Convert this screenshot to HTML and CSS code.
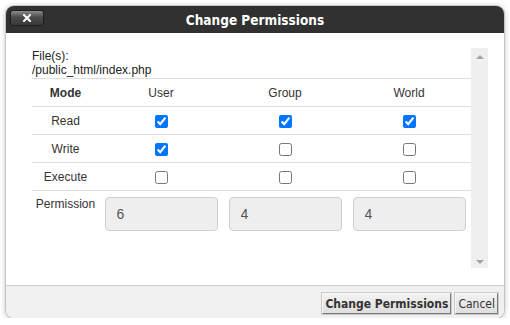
FILE: index.html
```html
<!DOCTYPE html>
<html lang="en">
<head>
  <meta charset="UTF-8">
  <title>Change Permissions</title>
  <link rel="stylesheet" href="styles.css">
</head>
<body>
  <div class="dialog">
    <div class="dialog-header">
      <button class="close-btn" title="Close">
        <svg width="8" height="8" viewBox="0 0 8 8"><path d="M1 1L7 7M7 1L1 7" stroke="#fff" stroke-width="2" stroke-linecap="square"/></svg>
      </button>
      <div class="dialog-title">Change Permissions</div>
    </div>

    <div class="dialog-body">
      <div class="perm-content">
        <div class="file-label">File(s):</div>
        <div class="file-path">/public_html/index.php</div>

        <table class="perm-table">
          <tr>
            <th>Mode</th>
            <td>User</td>
            <td>Group</td>
            <td>World</td>
          </tr>
          <tr>
            <td>Read</td>
            <td><input type="checkbox" checked></td>
            <td><input type="checkbox" checked></td>
            <td><input type="checkbox" checked></td>
          </tr>
          <tr>
            <td>Write</td>
            <td><input type="checkbox" checked></td>
            <td><input type="checkbox"></td>
            <td><input type="checkbox"></td>
          </tr>
          <tr>
            <td>Execute</td>
            <td><input type="checkbox"></td>
            <td><input type="checkbox"></td>
            <td><input type="checkbox"></td>
          </tr>
          <tr class="perm-row">
            <td>Permission</td>
            <td><input type="text" class="perm-input" value="6" disabled></td>
            <td><input type="text" class="perm-input" value="4" disabled></td>
            <td><input type="text" class="perm-input" value="4" disabled></td>
          </tr>
        </table>
      </div>

      <div class="scrollbar">
        <span class="arrow-up"></span>
        <span class="arrow-down"></span>
      </div>
    </div>

    <div class="dialog-footer">
      <button class="btn btn-primary">Change Permissions</button>
      <button class="btn">Cancel</button>
    </div>
  </div>
</body>
</html>
```

FILE: styles.css
```css
* {
  box-sizing: border-box;
}

body {
  margin: 0;
  background-color: #fff;
  font-family: 'Liberation Sans', Arial, sans-serif;
  font-size: 12px;
  color: #333;
}

.dialog {
  width: 498px;
  height: 312px;
  margin: 6px 0 0 6px;
  display: flex;
  flex-direction: column;
  border-radius: 8px;
  overflow: hidden;
  box-shadow: 0 0 0 1px #c4c4c4, 0 1px 6px rgba(0, 0, 0, 0.3);
}

.dialog-header {
  height: 27px;
  flex-shrink: 0;
  background-color: #313131;
  display: flex;
  align-items: center;
  position: relative;
}

.close-btn {
  width: 34px;
  height: 16px;
  margin: -3px 0 0 4px;
  padding: 0;
  border: 1px solid #1e1e1e;
  border-radius: 3px;
  background: linear-gradient(#8a8a8a, #4a4a4a 45%, #3a3a3a);
  display: flex;
  align-items: center;
  justify-content: center;
  cursor: pointer;
}

.dialog-title {
  position: absolute; /* centred over the whole bar, not beside the close button */
  left: 0;
  right: 0;
  text-align: center;
  font-family: 'DejaVu Sans Condensed', 'DejaVu Sans', sans-serif;
  font-weight: bold;
  font-size: 13.5px;
  color: #fff;
  pointer-events: none;
}

.dialog-body {
  flex: 1;
  background-color: #fff;
  display: flex;
  align-items: flex-start;
  padding: 15px 16px 0 26px;
}

.perm-content {
  width: 439px;
  padding-top: 1px;
}

.file-label,
.file-path {
  line-height: 14px;
  color: #222;
}

.perm-table {
  width: 439px;
  margin-top: 1px;
  border-collapse: collapse;
}

.perm-table tr {
  border-top: 1px solid #dedede;
}

.perm-table th,
.perm-table td {
  height: 28px;
  padding: 0;
  text-align: center;
  vertical-align: middle;
  font-weight: normal;
}

.perm-table th {
  font-weight: bold;
}

.perm-table tr > :first-child {
  width: 67px;
}

.perm-table input[type="checkbox"] {
  margin: 0;
  width: 13px;
  height: 13px;
  vertical-align: middle;
}

.perm-row td {
  vertical-align: top;
  padding-top: 6px;
}

.perm-input {
  width: 113px;
  height: 34px;
  margin-top: 0;
  padding: 0 11px;
  border: 1px solid #cfcfcf;
  border-radius: 4px;
  background-color: #eee;
  font-family: 'Liberation Sans', Arial, sans-serif;
  font-size: 14px;
  color: #555;
}

.scrollbar {
  width: 17px;
  height: 220px;
  background-color: #efefef;
  display: flex;
  flex-direction: column;
  justify-content: space-between;
  align-items: center;
  padding: 7px 0 4px;
}

.arrow-up,
.arrow-down {
  width: 0;
  height: 0;
  border-left: 4px solid transparent;
  border-right: 4px solid transparent;
}

.arrow-up {
  border-bottom: 4px solid #a3a3a3;
}

.arrow-down {
  border-top: 4px solid #a3a3a3;
}

.dialog-footer {
  height: 33px;
  flex-shrink: 0;
  background-color: #f0f0f0;
  border-top: 1px solid #cfcfcf;
  display: flex;
  justify-content: flex-end;
  align-items: flex-start;
  gap: 4px;
  padding: 7px 6px 0 0;
}

.btn {
  height: 21px;
  padding: 0 2px;
  border: 1px solid;
  border-color: #f8f8f8 #7a7a7a #7a7a7a #f8f8f8;
  box-shadow: 0 0 0 1px #c8c8c8;
  background: linear-gradient(#f2f2f2, #dedede);
  font-family: 'DejaVu Sans Condensed', 'DejaVu Sans', sans-serif;
  font-size: 12px;
  color: #333;
  cursor: pointer;
}

.btn-primary {
  font-weight: bold;
}
```
